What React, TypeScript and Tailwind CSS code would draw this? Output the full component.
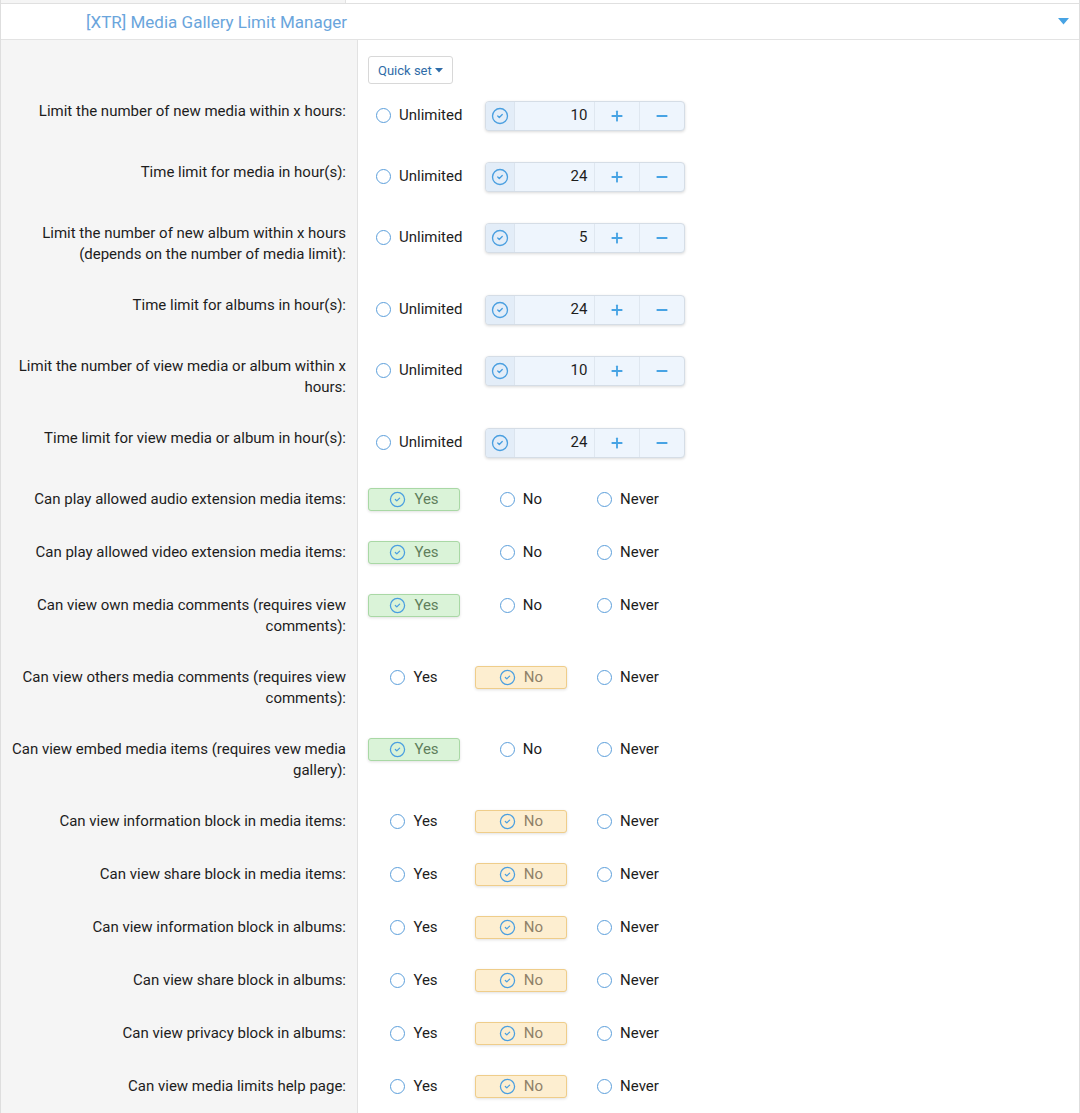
import { CircleCheck, Plus, Minus } from 'lucide-react';

type Choice = 'yes' | 'no' | 'never';

interface LimitRow {
  label: string;
  value: number;
}

interface PermRow {
  label: string;
  value: Choice;
}

const limitRows: LimitRow[] = [
  { label: 'Limit the number of new media within x hours:', value: 10 },
  { label: 'Time limit for media in hour(s):', value: 24 },
  { label: 'Limit the number of new album within x hours (depends on the number of media limit):', value: 5 },
  { label: 'Time limit for albums in hour(s):', value: 24 },
  { label: 'Limit the number of view media or album within x hours:', value: 10 },
  { label: 'Time limit for view media or album in hour(s):', value: 24 },
];

const permRows: PermRow[] = [
  { label: 'Can play allowed audio extension media items:', value: 'yes' },
  { label: 'Can play allowed video extension media items:', value: 'yes' },
  { label: 'Can view own media comments (requires view comments):', value: 'yes' },
  { label: 'Can view others media comments (requires view comments):', value: 'no' },
  { label: 'Can view embed media items (requires vew media gallery):', value: 'yes' },
  { label: 'Can view information block in media items:', value: 'no' },
  { label: 'Can view share block in media items:', value: 'no' },
  { label: 'Can view information block in albums:', value: 'no' },
  { label: 'Can view share block in albums:', value: 'no' },
  { label: 'Can view privacy block in albums:', value: 'no' },
  { label: 'Can view media limits help page:', value: 'no' },
];

const font = { fontFamily: 'Roboto, "Liberation Sans", sans-serif' };

function Radio() {
  return <span className="w-[15px] h-[15px] rounded-full border-[1.8px] border-[#5c9fdb] bg-white flex-shrink-0" />;
}

function Option({ label, state }: { label: string; state: 'off' | 'yes' | 'no' }) {
  if (state === 'yes') {
    return (
      <div className="min-w-[92px] h-[23px] px-2 flex items-center justify-center gap-[8px] rounded-[3px] border border-[#a9d8a5] bg-[#daf3d8] shadow-[0_1px_3px_rgba(0,0,0,0.12)] text-[#5f7f5c]">
        <CircleCheck size={17} strokeWidth={1.8} className="text-[#4a9fe0]" />
        <span>{label}</span>
      </div>
    );
  }
  if (state === 'no') {
    return (
      <div className="min-w-[92px] h-[23px] px-2 flex items-center justify-center gap-[8px] rounded-[3px] border border-[#efcd8a] bg-[#fdeed0] shadow-[0_1px_3px_rgba(0,0,0,0.12)] text-[#8f8169]">
        <CircleCheck size={17} strokeWidth={1.8} className="text-[#4a9fe0]" />
        <span>{label}</span>
      </div>
    );
  }
  return (
    <div className="min-w-[92px] h-[23px] px-2 flex items-center justify-center gap-[8px] text-[#1d1d1d]">
      <Radio />
      <span>{label}</span>
    </div>
  );
}

function SpinBox({ value }: { value: number }) {
  return (
    <div className="flex h-[30px] w-[200px] rounded-[4px] border border-[#d5dde6] bg-[#eef5fd] shadow-[0_1px_3px_rgba(0,0,0,0.15)] overflow-hidden">
      <div className="w-[29px] flex items-center justify-center bg-[#e3edf8] border-r border-[#dbe4ee]">
        <CircleCheck size={18} strokeWidth={1.8} className="text-[#4a9fe0]" />
      </div>
      <div className="w-[79px] flex items-center justify-end pr-[7px] text-[#1d1d1d]">{value}</div>
      <div className="w-[45px] flex items-center justify-center border-l border-[#dfe7f0]">
        <Plus size={16} strokeWidth={2.8} className="text-[#47a3e4]" />
      </div>
      <div className="w-[45px] flex items-center justify-center border-l border-[#dfe7f0]">
        <Minus size={16} strokeWidth={2.8} className="text-[#47a3e4]" />
      </div>
    </div>
  );
}

function Row({ label, children }: { label: string; children: React.ReactNode }) {
  return (
    <div className="flex">
      <div className="w-[357px] flex-shrink-0 bg-[#f5f5f5] border-r border-[#e2e2e2] py-[15px] pl-[10px] pr-[11px] text-right text-[#1d1d1d]">
        <div className="pt-[1px] -mb-[1px]">{label}</div>
      </div>
      <div className="flex-1 py-[15px] pl-[10px]">{children}</div>
    </div>
  );
}

export default function App() {
  return (
    <div className="bg-white text-[15px] leading-[21px] w-[1080px] min-h-[1113px] border-x border-[#dedede]" style={font}>
      {/* Strip from the block above */}
      <div className="flex h-[4px] border-b border-[#e0e0e0]">
        <div className="w-[345px] bg-[#f5f5f5] border-r border-[#e2e2e2]" />
        <div className="flex-1" />
      </div>

      {/* Header */}
      <div className="flex items-center h-[36px] border-b border-[#e3e3e3]">
        <div className="w-[357px] pr-[11px] pt-[2px] text-right text-[17px] text-[#6aa5dc]">[XTR] Media Gallery Limit Manager</div>
        <div className="flex-1 flex justify-end pr-[10px]">
          <svg width="11" height="7" viewBox="0 0 11 7">
            <path d="M0 0 H11 L5.5 6.5 Z" fill="#47a3e4" />
          </svg>
        </div>
      </div>

      {/* Quick set */}
      <div className="flex">
        <div className="w-[357px] flex-shrink-0 bg-[#f5f5f5] border-r border-[#e2e2e2]" />
        <div className="flex-1 pt-[16px] pb-[1px] pl-[10px]">
          <button className="h-[28px] px-[9px] flex items-center gap-[3px] rounded-[3px] border border-[#d8d8d8] bg-white text-[13px] text-[#2f6ca8]">
            Quick set
            <svg width="8" height="5" viewBox="0 0 8 5">
              <path d="M0 0 H8 L4 4.5 Z" fill="#2f6ca8" />
            </svg>
          </button>
        </div>
      </div>

      {limitRows.map((row) => (
        <Row key={row.label} label={row.label}>
          <div className="flex items-center gap-[15px] h-[31px]">
            <Option label="Unlimited" state="off" />
            <SpinBox value={row.value} />
          </div>
        </Row>
      ))}

      {permRows.map((row) => (
        <Row key={row.label} label={row.label}>
          <div className="flex gap-[15px]">
            <Option label="Yes" state={row.value === 'yes' ? 'yes' : 'off'} />
            <Option label="No" state={row.value === 'no' ? 'no' : 'off'} />
            <Option label="Never" state="off" />
          </div>
        </Row>
      ))}
    </div>
  );
}
